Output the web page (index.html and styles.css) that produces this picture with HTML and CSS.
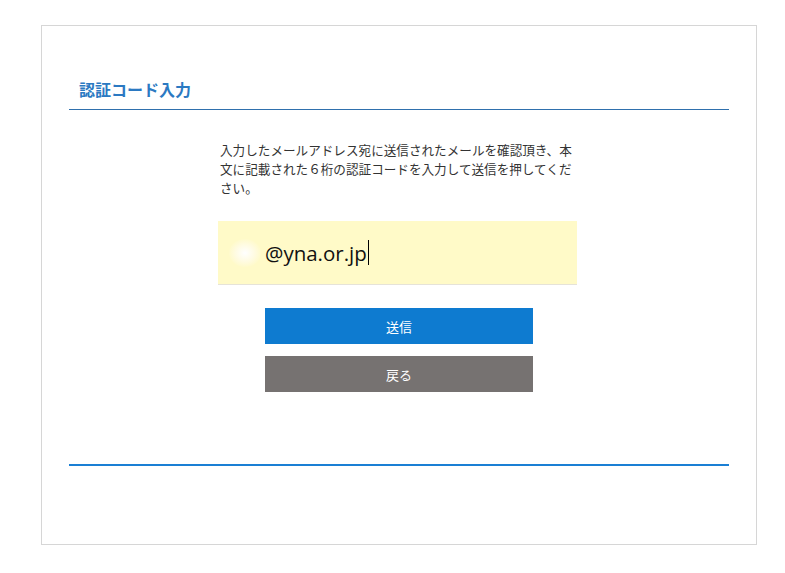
FILE: index.html
```html
<!DOCTYPE html>
<html lang="ja">
<head>
<meta charset="utf-8">
<title>認証コード入力</title>
<link rel="stylesheet" href="styles.css">
</head>
<body>
<div class="panel">
  <h1 class="title">認証コード入力</h1>
  <div class="content">
    <p class="lead">入力したメールアドレス宛に送信されたメールを確認頂き、本文に記載された６桁の認証コードを入力して送信を押してください。</p>
    <div class="field">
      <span class="blur"></span>
      <span class="value">@yna.or.jp</span><span class="caret"></span>
    </div>
    <div class="actions">
      <button class="btn btn-send" type="button">送信</button>
      <button class="btn btn-back" type="button">戻る</button>
    </div>
  </div>
  <div class="footer-line"></div>
</div>
</body>
</html>
```
FILE: styles.css
```css
html, body {
  margin: 0;
  padding: 0;
  background: #ffffff;
}
body {
  font-family: "Noto Sans CJK JP", "Noto Sans", sans-serif;
  color: #333333;
}
.panel {
  box-sizing: border-box;
  width: 716px;
  height: 520px;
  margin: 25px 0 0 41px;
  border: 1px solid #d6d6d6;
  padding: 53px 27px 0 27px;
  display: flex;
  flex-direction: column;
}
.title {
  margin: 0;
  padding: 0 0 10px 10px;
  font-size: 16px;
  line-height: 20px;
  font-weight: bold;
  color: #2b79c2;
  border-bottom: 1px solid #2f70ad;
}
.content {
  width: 359px;
  margin-left: 149px;
  display: flex;
  flex-direction: column;
}
.lead {
  margin: 30px 0 0 2px;
  font-size: 12.6px;
  line-height: 19px;
  color: #333333;
}
.field {
  margin-top: 24px;
  height: 63px;
  background: #fffac8;
  border-bottom: 1px solid #e6e3d8;
  display: flex;
  align-items: center;
  padding-left: 11px;
}
.blur {
  width: 32px;
  height: 28px;
  border-radius: 50%;
  background: radial-gradient(ellipse at center, #ffffff 0%, #fffbe0 45%, #fffac8 75%);
  margin-right: 4px;
}
.value {
  font-family: "Open Sans", "Noto Sans", sans-serif;
  font-size: 20.5px;
  color: #111111;
  line-height: 26px;
}
.caret {
  width: 1px;
  height: 25px;
  background: #000000;
  margin-left: 1px;
}
.actions {
  margin-top: 23px;
  margin-left: 47px;
  display: flex;
  flex-direction: column;
  align-items: flex-start;
  gap: 12px;
}
.btn {
  width: 268px;
  height: 36px;
  border: none;
  padding: 0;
  margin: 0;
  font-family: "Noto Sans CJK JP", sans-serif;
  font-size: 13px;
  color: #ffffff;
}
.btn-send {
  background: #0e7bd0;
}
.btn-back {
  background: #767271;
}
.footer-line {
  margin-top: 72px;
  height: 2px;
  background: #1a7fd4;
}
```
